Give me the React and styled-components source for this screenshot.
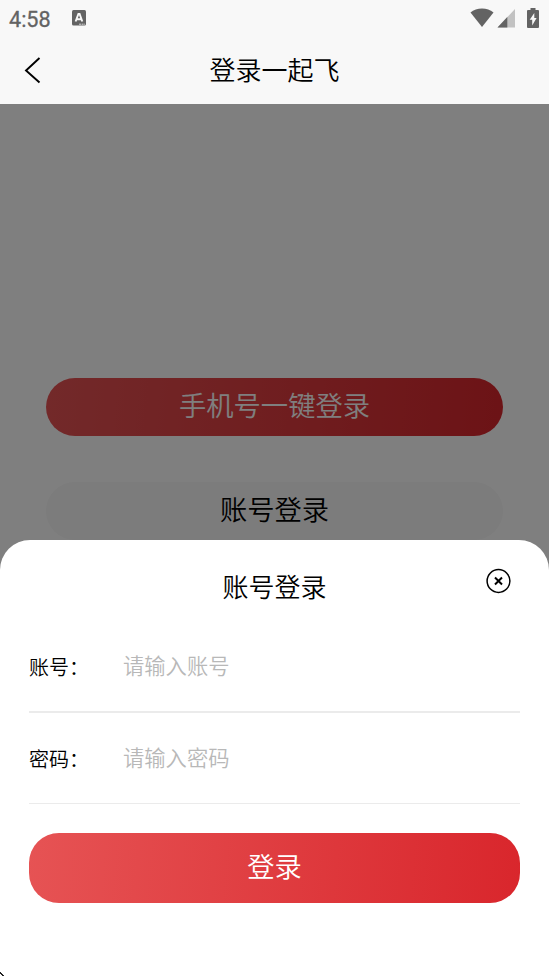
import React, { useState } from "react";
import styled, { createGlobalStyle } from "styled-components";

const fields = [
    { name: 'account', label: '账号：', placeholder: '请输入账号', type: 'text', line: 2 },
    { name: 'password', label: '密码：', placeholder: '请输入密码', type: 'password', line: 1 },
]

const StatusIcons = () => (
    <Icons>
        <svg width="24" height="20" viewBox="0 0 24 20">
            <path d="M0.5 4.6C3.6 2 7.600 .6 12 .6S20.400 2 23.500 4.600L12 19Z" fill="#636363" />
        </svg>
        <svg width="18" height="19" viewBox="0 0 18 19">
            <path d="M18 0V18.500H0.500Z" fill="#c2c2c2" />
            <path d="M10.300 8V18.500H0.500Z" fill="#636363" />
        </svg>
        <svg width="12" height="21" viewBox="0 0 12 21">
            <path d="M3.500 0h5v2H11q1 0 1 1v16q0 1-1 1H1q-1 0-1-1V3q0-1 1-1h2.500Z" fill="#636363" />
            <path d="M7.300 5L2.700 11.800H5.200V17.500L9.600 10.100H7.300Z" fill="#f8f8f8" />
        </svg>
    </Icons>
)

const App = () => {
    const [open, setOpen] = useState(true)
    const [values, setValues] = useState({ account: '', password: '' })

    const handleChange = (e) => {
        setValues({ ...values, [e.target.name]: e.target.value })
    }

    return (
        <Screen>
            <GlobalStyle />
            <StatusBar>
                <Clock>4:58</Clock>
                <svg width="15" height="16" viewBox="0 0 15 16">
                    <rect width="14" height="15.500" rx="1.500" fill="#636363" />
                    <path d="M3.600 11.500L6.400 4H7.600L10.300 11.500M5 9.300H9.300" fill="none" stroke="#f8f8f8" strokeWidth="1.900" />
                    <path d="M7 14.200H13" stroke="#d5d5d5" strokeWidth="1" strokeDasharray="2 .6" />
                </svg>
                <StatusIcons />
            </StatusBar>
            <NavBar>
                <BackButton aria-label="返回">
                    <svg width="18" height="28" viewBox="0 0 18 28">
                        <path d="M15.500 2L2 14.500L15.500 26.500" fill="none" stroke="#000" strokeWidth="1.900" />
                    </svg>
                </BackButton>
                <NavTitle>登录一起飞</NavTitle>
            </NavBar>
            <Body>
                <Choices>
                    <ChoiceButton $primary>手机号一键登录</ChoiceButton>
                    <ChoiceButton onClick={() => setOpen(true)}>账号登录</ChoiceButton>
                </Choices>
                {
                    open &&
                    <Overlay>
                        <Sheet>
                            <SheetHeader>
                                <h2>账号登录</h2>
                                <CloseButton aria-label="关闭" onClick={() => setOpen(false)}>
                                    <svg width="26" height="26" viewBox="0 0 26 26" fill="none" stroke="#000">
                                        <circle cx="13.500" cy="13" r="11.400" strokeWidth="1.500" />
                                        <path d="M10 9.500L17 16.500M17 9.500L10 16.500" strokeWidth="2" />
                                    </svg>
                                </CloseButton>
                            </SheetHeader>
                            {fields.map((field) => (
                                <Field key={field.name} $line={field.line}>
                                    <span>{field.label}</span>
                                    <input
                                        name={field.name}
                                        type={field.type}
                                        placeholder={field.placeholder}
                                        value={values[field.name]}
                                        onChange={handleChange}
                                    />
                                </Field>
                            ))}
                            <LoginButton>登录</LoginButton>
                            <Corner width="4" height="5" viewBox="0 0 4 5">
                                <path d="M0 1h1v1h1v1h1v1h1v1h-2v-1h-1v-1h-1Z" fill="#222" />
                            </Corner>
                        </Sheet>
                    </Overlay>
                }
            </Body>
        </Screen>
    )
}

const GlobalStyle = createGlobalStyle`
    * {
        box-sizing: border-box;
    }
    body{
        margin: 0;
        background: #fff;
    }
    button, input{
        font-family: inherit;
        font-weight: inherit;
        border: 0;
        outline: none;
        padding: 0;
        background: transparent;
    }
`;
const Screen = styled.div`
    width: 549px;
    height: 976px;
    display: flex;
    flex-direction: column;
    overflow: hidden;
    color: #000;
    font-family: "Noto Sans CJK SC", sans-serif;
    font-weight: 350;
`;
const StatusBar = styled.div`
    height: 38px;
    display: flex;
    align-items: center;
    padding: 0 10px 2px 9px;
    background: #f8f8f8;
`;
const Clock = styled.span`
    width: 63px;
    font-family: Roboto, sans-serif;
    font-size: 21.600px;
    font-weight: 400;
    line-height: 36px;
    padding-top: 3px;
    color: #636363;
    -webkit-text-stroke: .3px #636363;
`;
const Icons = styled.div`
    display: flex;
    align-items: center;
    margin-left: auto;
    svg:nth-child(2){
        margin: 0 12px 0 3px;
    }
`;
const NavBar = styled.div`
    height: 66px;
    display: grid;
    grid-template-columns: 60px 1fr 60px;
    align-items: center;
    background: #f8f8f8;
`;
const BackButton = styled.button`
    display: flex;
    padding: 0 0 2px 24px;
`;
const NavTitle = styled.h1`
    margin: 0;
    padding-bottom: 4px;
    font-size: 26px;
    font-weight: inherit;
    line-height: 38px;
    text-align: center;
`;
const Body = styled.div`
    flex: 1;
    position: relative;
    background: #fff;
`;
const Choices = styled.div`
    display: flex;
    flex-direction: column;
    gap: 46px;
    padding: 274px 46px 0;
`;
const ChoiceButton = styled.button`
    height: 58px;
    border-radius: 29px;
    padding-bottom: 6px;
    font-size: 27.300px;
    line-height: 40px;
    color: ${props => props.$primary ? '#fff' : '#000'};
    background: ${props => props.$primary ? 'linear-gradient(95deg, #e65354, #d9262c)' : '#f8f8f8'};
`;
const Overlay = styled.div`
    position: absolute;
    inset: 0;
    display: flex;
    align-items: flex-end;
    background: rgba(0,0,0,.5);
`;
const Sheet = styled.div`
    position: relative;
    width: 100%;
    height: 436px;
    display: flex;
    flex-direction: column;
    padding: 0 29px;
    border-radius: 30px 30px 0 0;
    background: #fff;
`;
const SheetHeader = styled.div`
    height: 81px;
    display: grid;
    grid-template-columns: 35px 1fr 35px;
    align-items: start;
    padding-top: 27px;
    h2{
        grid-column: 2;
        margin: 0;
        font-size: 26px;
        font-weight: inherit;
        line-height: 38px;
        text-align: center;
    }
`;
const CloseButton = styled.button`
    display: flex;
    padding-top: 1px;
`;
const Field = styled.label`
    height: ${props => props.$line === 2 ? '92px' : '91px'};
    display: flex;
    align-items: center;
    border-bottom: ${props => props.$line}px solid #ebebeb;
    span{
        width: 94px;
        padding-top: 1px;
        font-size: 20px;
        line-height: 30px;
    }
    input{
        flex: 1;
        height: 40px;
        padding-bottom: 4px;
        font-size: 21.300px;
    }
    input::placeholder{
        color: #b8b8b8;
        opacity: 1;
    }
`;
const LoginButton = styled.button`
    height: 70px;
    margin-top: 29px;
    padding-bottom: 6px;
    border-radius: 30px;
    font-size: 27.300px;
    line-height: 40px;
    color: #fff;
    background: linear-gradient(95deg, #e65354, #d9262c);
`;
const Corner = styled.svg`
    position: absolute;
    left: 0;
    bottom: 0;
`;

export default App
